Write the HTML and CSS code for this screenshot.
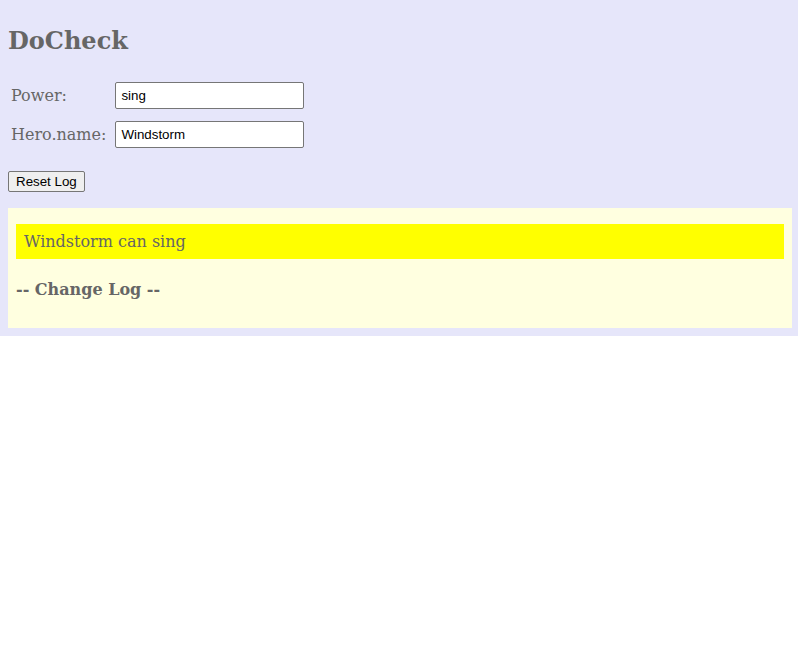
FILE: index.html
```html
<!DOCTYPE html>
<html>
<head>
<meta charset="utf-8">
<link rel="stylesheet" href="styles.css">
</head>
<body>
<div class="parent">
  <h2 class="title">DoCheck</h2>
  <table class="form">
    <tr>
      <td class="label">Power: </td>
      <td><input class="field" type="text" value="sing"></td>
    </tr>
    <tr>
      <td class="label">Hero.name: </td>
      <td><input class="field" type="text" value="Windstorm"></td>
    </tr>
  </table>
  <p class="actions"><button class="btn">Reset Log</button></p>
  <div class="child">
    <div class="hero">Windstorm can sing</div>
    <h4 class="log-title">-- Change Log --</h4>
  </div>
</div>
</body>
</html>
```

FILE: styles.css
```css
body {
  margin: 0;
  font-family: "DejaVu Serif", serif;
  color: #666;
}
.parent {
  background: #e6e6fa;
  padding: 8px 6px 8px 8px;
}
.title {
  font-size: 24px;
  margin: 0 0 19.92px 0;
  padding-top: 18px;
}
.form {
  border-spacing: 2px;
}
.label {
  font-size: 16px;
}
.form td {
  padding: 1px;
}
.field {
  box-sizing: border-box;
  width: 189px;
  height: 27px;
  padding: 0 5px;
  margin: 4px 0 4px 5px;
  border: 1px solid #767676;
  border-radius: 2px;
  font: 13.33px "Liberation Sans", Arial, sans-serif;
  color: #000;
  background: #fff;
}
.actions {
  margin: 16px 0;
}
.btn {
  font: 13.33px "Liberation Sans", Arial, sans-serif;
  color: #000;
  background: #efefef;
  border: 1px solid #767676;
  border-radius: 2px;
  padding: 2px 7px;
}
.child {
  background: #ffffe0;
  padding: 8px;
}
.hero {
  background: #ffff00;
  margin-top: 8px;
  padding: 8px;
  font-size: 16px;
}
.log-title {
  font-size: 16px;
  margin: 21.28px 0;
}
```
